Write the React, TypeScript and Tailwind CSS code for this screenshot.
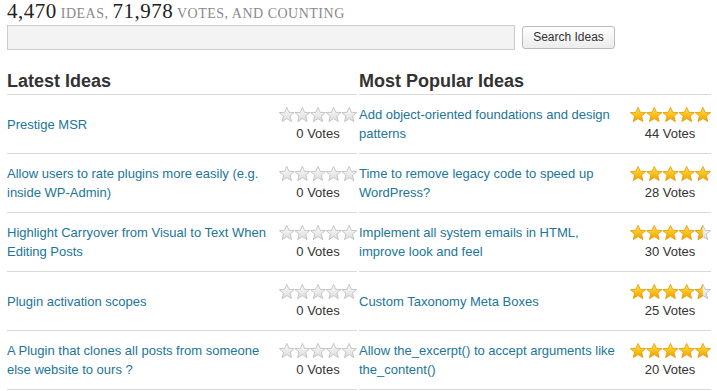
import { useId } from "react";

type Idea = { title: string; rating: number; votes: number };

const LATEST: Idea[] = [
  { title: "Prestige MSR", rating: 0, votes: 0 },
  { title: "Allow users to rate plugins more easily (e.g. inside WP-Admin)", rating: 0, votes: 0 },
  { title: "Highlight Carryover from Visual to Text When Editing Posts", rating: 0, votes: 0 },
  { title: "Plugin activation scopes", rating: 0, votes: 0 },
  { title: "A Plugin that clones all posts from someone else website to ours ?", rating: 0, votes: 0 },
];

const POPULAR: Idea[] = [
  { title: "Add object-oriented foundations and design patterns", rating: 5, votes: 44 },
  { title: "Time to remove legacy code to speed up WordPress?", rating: 5, votes: 28 },
  { title: "Implement all system emails in HTML, improve look and feel", rating: 4.5, votes: 30 },
  { title: "Custom Taxonomy Meta Boxes", rating: 4.5, votes: 25 },
  { title: "Allow the_excerpt() to accept arguments like the_content()", rating: 5, votes: 20 },
];

const STAR = "8,0.4 10.2,5.3 15.6,5.6 11.4,9.1 12.8,14.6 8,11.6 3.2,14.6 4.6,9.1 0.4,5.6 5.8,5.3";

function Stars({ rating, width }: { rating: number; width: number }) {
  const id = useId().replace(/:/g, "");
  return (
    <svg width={width} height="16" viewBox="0 0 80 16" preserveAspectRatio="none" className="mx-auto block">
      <defs>
        <linearGradient id={`g${id}`} x1="0" y1="0" x2="0" y2="1">
          <stop offset="0" stopColor="#fbfbfb" />
          <stop offset="1" stopColor="#dcdcdc" />
        </linearGradient>
        <linearGradient id={`y${id}`} x1="0" y1="0" x2="0" y2="1">
          <stop offset="0" stopColor="#ffe066" />
          <stop offset="0.55" stopColor="#fcbf16" />
          <stop offset="1" stopColor="#f19b00" />
        </linearGradient>
        <clipPath id={`h${id}`}>
          <rect x="0" y="0" width="8" height="16" />
        </clipPath>
      </defs>
      {[0, 1, 2, 3, 4].map((i) => {
        const full = rating >= i + 1;
        const half = !full && rating > i;
        return (
          <g key={i} transform={`translate(${i * 16},0)`}>
            {!full && (
              <polygon points={STAR} fill={`url(#g${id})`} stroke="#b9b9b9" strokeWidth="0.8" strokeLinejoin="round" />
            )}
            {(full || half) && (
              <polygon
                points={STAR}
                fill={`url(#y${id})`}
                stroke="#e39a00"
                strokeWidth="0.8"
                strokeLinejoin="round"
                clipPath={half ? `url(#h${id})` : undefined}
              />
            )}
          </g>
        );
      })}
    </svg>
  );
}

function Column({
  heading,
  ideas,
  width,
  ratingWidth,
  starWidth,
}: {
  heading: string;
  ideas: Idea[];
  width: string;
  ratingWidth: string;
  starWidth: number;
}) {
  return (
    <div className={width}>
      <h2 className="pt-[22px] pb-[2px] text-[18px] leading-[22px] font-bold text-[#333] border-b border-[#d9d9d9]">
        {heading}
      </h2>
      {ideas.map((idea) => (
        <div key={idea.title} className="flex items-center h-[59px] border-b border-[#d9d9d9]">
          <a href="#" className="flex-1 text-[13px] leading-[19px] text-[#21759b] pr-1">
            {idea.title}
          </a>
          <div className={`${ratingWidth} self-start pt-[12px] text-center`}>
            <Stars rating={idea.rating} width={starWidth} />
            <div className="mt-[1px] text-[13px] leading-[19px] text-[#333]">{idea.votes} Votes</div>
          </div>
        </div>
      ))}
    </div>
  );
}

export default function App() {
  return (
    <div className="w-[717px] h-[391px] overflow-hidden bg-white pl-[7px] font-['Liberation_Sans',Arial,sans-serif]">
      <div className="h-[22px] overflow-hidden font-['Liberation_Serif','Times_New_Roman',serif] leading-[22px] text-[#222] whitespace-nowrap">
        <span className="text-[21px] tracking-[0.5px]">4,470</span>
        <span className="text-[14px] text-[#8a8a8a] tracking-[0.5px]"> IDEAS, </span>
        <span className="text-[21px] tracking-[0.5px]">71,978</span>
        <span className="text-[14px] text-[#8a8a8a] tracking-[0.5px]"> VOTES, AND COUNTING</span>
      </div>
      <div className="flex items-center gap-[7px] mt-[2px] h-[26px]">
        <input className="w-[508px] h-[25px] bg-[#f3f3f3] border border-[#cccccc] outline-none" />
        <button className="w-[93px] h-[23px] rounded-[3px] border border-[#bbbbbb] bg-gradient-to-b from-[#fefefe] to-[#ececec] text-[12px] text-[#333]">
          Search Ideas
        </button>
      </div>
      <div className="flex gap-[2px] -mt-[2px]">
        <Column heading="Latest Ideas" ideas={LATEST} width="w-[350px]" ratingWidth="w-[78px]" starWidth={78} />
        <Column heading="Most Popular Ideas" ideas={POPULAR} width="w-[352px]" ratingWidth="w-[82px]" starWidth={81} />
      </div>
    </div>
  );
}
